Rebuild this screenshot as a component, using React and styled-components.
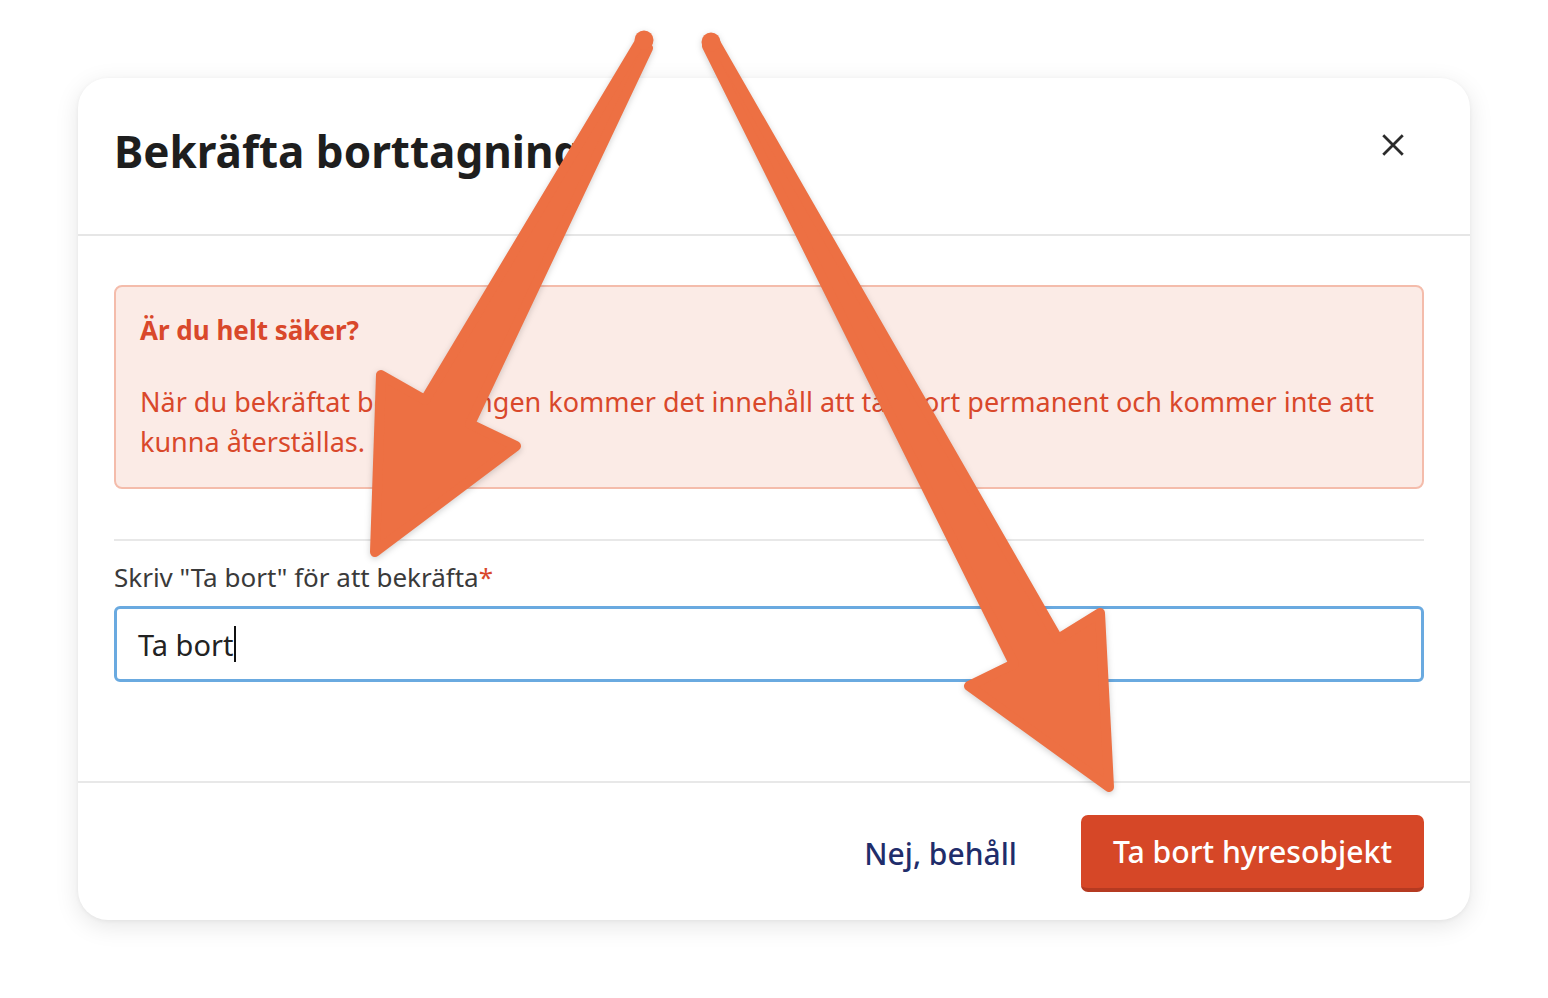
import React from "react";
import styled, { createGlobalStyle } from "styled-components";

const GlobalStyle = createGlobalStyle`
  html, body { margin: 0; padding: 0; background: #ffffff; }
  body { font-family: "Noto Sans", "Open Sans", sans-serif; color: #222; }
  * { box-sizing: border-box; }
`;

const Page = styled.div`
  position: relative;
  width: 1548px;
  height: 998px;
  padding: 78px 0 0 78px;
  overflow: hidden;
`;

const Card = styled.div`
  width: 1392px;
  height: 842px;
  background: #fff;
  border-radius: 30px;
  box-shadow: 0 6px 24px rgba(0, 0, 0, 0.10), 0 1px 4px rgba(0, 0, 0, 0.05);
  display: flex;
  flex-direction: column;
  overflow: hidden;
`;

const Header = styled.div`
  height: 158px;
  flex: none;
  display: flex;
  align-items: center;
  justify-content: space-between;
  padding: 0 60px 10px 36px;
  border-bottom: 2px solid #e6e6e6;
`;

const Title = styled.h2`
  margin: 0;
  font-size: 44px;
  font-weight: 700;
  color: #1e1e1e;
`;

const CloseButton = styled.button`
  width: 34px;
  height: 34px;
  border: 0;
  background: transparent;
  padding: 0;
  display: flex;
  align-items: center;
  justify-content: center;
  margin-top: -12px;
  cursor: pointer;
`;

const Body = styled.div`
  flex: 1;
  padding: 49px 46px 0 36px;
  display: flex;
  flex-direction: column;
`;

const Alert = styled.div`
  background: #fbebe6;
  border: 2px solid #f4bcab;
  border-radius: 8px;
  padding: 23px 24px 25px;
  color: #d9482b;
`;

const AlertTitle = styled.div`
  font-size: 26px;
  font-weight: 700;
  line-height: 40px;
  margin-bottom: 32px;
`;

const AlertText = styled.p`
  margin: 0;
  font-size: 27px;
  line-height: 40px;
`;

const Divider = styled.hr`
  border: 0;
  border-top: 2px solid #e8e8e8;
  margin: 50px 0 0;
`;

const Field = styled.div`
  display: flex;
  flex-direction: column;
  gap: 13px;
  margin-top: 20px;
`;

const Label = styled.label`
  font-size: 26px;
  line-height: 32px;
  color: #3a3a3a;
`;

const Required = styled.span`
  color: #d9482b;
`;

const InputBox = styled.div`
  height: 76px;
  border: 3px solid #6aaae0;
  border-radius: 6px;
  display: flex;
  align-items: center;
  padding: 0 21px;
  font-size: 29px;
  color: #222;
`;

const Caret = styled.span`
  display: inline-block;
  width: 2px;
  height: 36px;
  background: #111;
  margin-left: 1px;
`;

const Footer = styled.div`
  flex: none;
  height: 139px;
  border-top: 2px solid #e8e8e8;
  display: flex;
  align-items: flex-start;
  justify-content: flex-end;
  gap: 64px;
  padding: 32px 46px 0 36px;
`;

const LinkButton = styled.button`
  border: 0;
  background: transparent;
  padding: 0;
  height: 76px;
  font-family: inherit;
  font-size: 30px;
  font-weight: 500;
  color: #1f2d6b;
  cursor: pointer;
`;

const DangerButton = styled.button`
  height: 77px;
  padding: 0 32px;
  border: 0;
  border-bottom: 4px solid #b53a21;
  border-radius: 7px;
  background: #d64727;
  color: #fff;
  font-family: inherit;
  font-size: 30.2px;
  font-weight: 500;
  cursor: pointer;
`;

const Overlay = styled.svg`
  position: absolute;
  left: 0;
  top: 0;
  width: 1548px;
  height: 998px;
  pointer-events: none;
  filter: drop-shadow(0 2px 3px rgba(0, 0, 0, 0.18));
`;

const ARROW = "#ed7043";

function Arrows() {
  return (
    <Overlay viewBox="0 0 1548 998">
      <g fill={ARROW} stroke={ARROW} strokeWidth="10" strokeLinejoin="round">
        <path d="M639,43 L425,400 L381,375 L375,552 L516,446 L470,424 L648,48 Z" />
        <path d="M707,46 L1014,664 L969,686 L1109,787 L1100,613 L1058,639 L715,42 Z" />
      </g>
      <circle cx="644" cy="40" r="9.5" fill={ARROW} />
      <circle cx="711" cy="42" r="9.5" fill={ARROW} />
    </Overlay>
  );
}

export default function App() {
  return (
    <>
      <GlobalStyle />
      <Page>
        <Card>
          <Header>
            <Title>Bekräfta borttagning</Title>
            <CloseButton aria-label="Stäng">
              <svg width="26" height="26" viewBox="0 0 24 24">
                <path d="M3 3 L21 21 M21 3 L3 21" stroke="#2b2b2b" strokeWidth="2.6" strokeLinecap="butt" />
              </svg>
            </CloseButton>
          </Header>
          <Body>
            <Alert>
              <AlertTitle>Är du helt säker?</AlertTitle>
              <AlertText>
                När du bekräftat borttagningen kommer det innehåll att tas bort permanent och kommer inte att kunna återställas.
              </AlertText>
            </Alert>
            <Divider />
            <Field>
              <Label>
                Skriv "Ta bort" för att bekräfta<Required>*</Required>
              </Label>
              <InputBox>
                Ta bort<Caret />
              </InputBox>
            </Field>
          </Body>
          <Footer>
            <LinkButton>Nej, behåll</LinkButton>
            <DangerButton>Ta bort hyresobjekt</DangerButton>
          </Footer>
        </Card>
        <Arrows />
      </Page>
    </>
  );
}
